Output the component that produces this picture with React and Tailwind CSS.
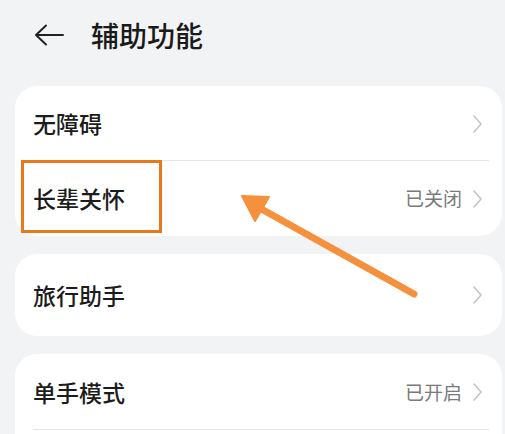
import React from "react";

const Chevron = () => (
  <svg width="11" height="20" viewBox="0 0 11 20" className="shrink-0">
    <path d="M2 2 L9 10 L2 18" fill="none" stroke="#c4c4c4" strokeWidth="1.6" strokeLinecap="round" strokeLinejoin="round" />
  </svg>
);

const Row = ({ label, status, divider, h = "h-[75px]" }) => (
  <div className={`relative flex items-center ${h} pl-[18px] pr-[19px]`}>
    <span className="flex-1 text-[23px] font-medium text-[#1c1c1c]">{label}</span>
    {status && <span className="text-[19px] text-[#7a7a7a] mr-[10px]">{status}</span>}
    <Chevron />
    {divider && <div className="absolute left-[18px] right-[13px] bottom-0 h-px bg-[#e6e6e6]" />}
  </div>
);

export default function App() {
  return (
    <div
      className="relative w-[505px] h-[434px] overflow-hidden bg-[#f2f3f5]"
      style={{ fontFamily: '"Noto Sans CJK SC", "Noto Sans", sans-serif' }}
    >
      {/* 标题栏 */}
      <div className="flex items-center h-[70px] pl-[34px]">
        <svg width="30" height="22" viewBox="0 0 30 22">
          <path d="M2 11 H29 M12 1.5 L2 11 L12 20.5" fill="none" stroke="#222" strokeWidth="2" strokeLinecap="round" strokeLinejoin="round" />
        </svg>
        <span className="ml-[27px] text-[28px] font-medium text-[#1a1a1a]">辅助功能</span>
      </div>

      <div className="flex flex-col gap-[18px] mt-[16px] ml-[15px] mr-[3px]">
        <div className="bg-white rounded-[22px]">
          <Row label="无障碍" divider />
          <Row label="长辈关怀" status="已关闭" />
        </div>
        <div className="bg-white rounded-[22px]">
          <Row label="旅行助手" h="h-[82px]" />
        </div>
        <div className="bg-white rounded-[22px]">
          <Row label="单手模式" status="已开启" divider h="h-[76px]" />
          <Row label="" />
        </div>
      </div>

      {/* 标注 */}
      <div className="absolute left-[21px] top-[160px] w-[141px] h-[73px] border-[3px] border-[#e8791a]" />
      <svg className="absolute left-0 top-0" width="505" height="434" viewBox="0 0 505 434">
        <line x1="414" y1="294" x2="256" y2="206" stroke="#f5903d" strokeWidth="7" strokeLinecap="round" />
        <polygon points="242,196 269,197 255,221" fill="#f5903d" stroke="#f5903d" strokeWidth="2" strokeLinejoin="round" />
      </svg>
    </div>
  );
}
